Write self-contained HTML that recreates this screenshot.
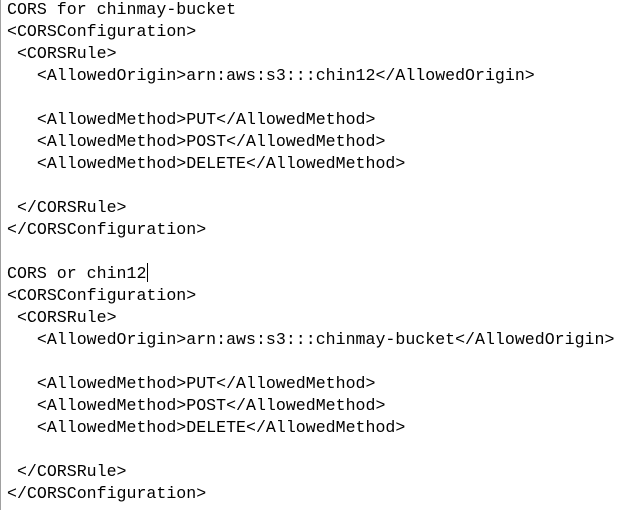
<!DOCTYPE html>
<html><head><style>
html,body{margin:0;padding:0;background:#fff;width:634px;height:510px;overflow:hidden}
.b{position:absolute;left:0;top:0;width:1px;height:510px;background:#a0a0a0}
pre{position:absolute;left:7px;top:-1px;margin:0;font-family:"Liberation Mono",monospace;font-size:16.6px;line-height:22px;color:#000}
.c{position:absolute;left:147px;top:263px;width:1px;height:19px;background:#000}
</style></head><body>
<div class="b"></div>
<pre>CORS for chinmay-bucket
&lt;CORSConfiguration&gt;
 &lt;CORSRule&gt;
   &lt;AllowedOrigin&gt;arn:aws:s3:::chin12&lt;/AllowedOrigin&gt;

   &lt;AllowedMethod&gt;PUT&lt;/AllowedMethod&gt;
   &lt;AllowedMethod&gt;POST&lt;/AllowedMethod&gt;
   &lt;AllowedMethod&gt;DELETE&lt;/AllowedMethod&gt;

 &lt;/CORSRule&gt;
&lt;/CORSConfiguration&gt;

CORS or chin12
&lt;CORSConfiguration&gt;
 &lt;CORSRule&gt;
   &lt;AllowedOrigin&gt;arn:aws:s3:::chinmay-bucket&lt;/AllowedOrigin&gt;

   &lt;AllowedMethod&gt;PUT&lt;/AllowedMethod&gt;
   &lt;AllowedMethod&gt;POST&lt;/AllowedMethod&gt;
   &lt;AllowedMethod&gt;DELETE&lt;/AllowedMethod&gt;

 &lt;/CORSRule&gt;
&lt;/CORSConfiguration&gt;</pre>
<div class="c"></div>
</body></html>
